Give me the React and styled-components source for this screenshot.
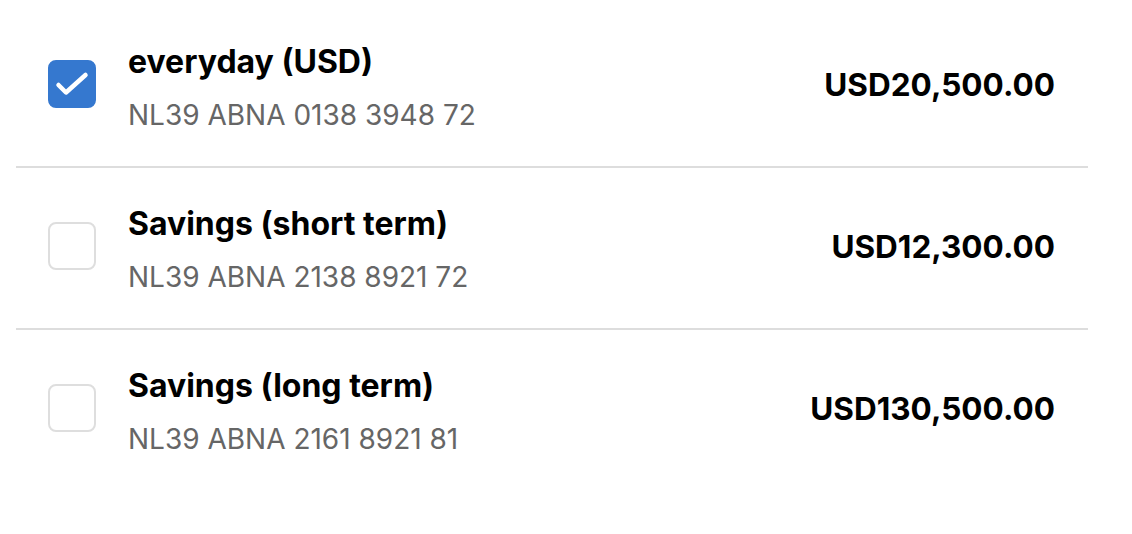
import React from "react";
import styled, { createGlobalStyle } from "styled-components";

const Global = createGlobalStyle`
  html, body { margin: 0; padding: 0; background: #fff; }
  body { font-family: Inter, "Noto Sans", sans-serif; -webkit-font-smoothing: antialiased; }
`;

const List = styled.ul`
  list-style: none;
  margin: 0 44px 0 16px;
  padding: 6px 0 0;
`;

const Row = styled.li`
  display: flex;
  align-items: center;
  height: 160px;
  box-sizing: content-box;
  padding: 0 33px 0 32px;
  border-bottom: ${(p) => (p.$last ? "none" : "2px solid #dddddd")};
`;

const Box = styled.span`
  flex: none;
  width: 48px;
  height: 48px;
  box-sizing: border-box;
  border-radius: 8px;
  margin-top: -4px;
  display: flex;
  align-items: center;
  justify-content: center;
  background: ${(p) => (p.$checked ? "#3578cf" : "#fff")};
  border: 2px solid ${(p) => (p.$checked ? "#3578cf" : "#dedede")};
`;

const Info = styled.div`
  flex: 1;
  margin-left: 32px;
  display: flex;
  flex-direction: column;
  gap: 17px;
  margin-top: 2px;
`;

const Title = styled.div`
  font-size: 32px;
  line-height: 38px;
  font-weight: 700;
  color: #000;
`;

const Iban = styled.div`
  font-size: 28px;
  line-height: 34px;
  color: #666;
`;

const Amount = styled.div`
  font-size: 31.5px;
  font-weight: 700;
  color: #000;
  margin-top: -4px;
`;

const accounts = [
  { name: "everyday (USD)", iban: "NL39 ABNA 0138 3948 72", amount: "USD20,500.00", checked: true },
  { name: "Savings (short term)", iban: "NL39 ABNA 2138 8921 72", amount: "USD12,300.00" },
  { name: "Savings (long term)", iban: "NL39 ABNA 2161 8921 81", amount: "USD130,500.00" },
];

export default function App() {
  return (
    <>
      <Global />
      <List>
        {accounts.map((a, i) => (
          <Row key={a.iban} $last={i === accounts.length - 1}>
            <Box $checked={a.checked}>
              {a.checked && (
                <svg width="48" height="48" viewBox="0 0 48 48" fill="none" style={{ margin: -2 }}>
                  <path d="M10.5 25 L18 32.5 L37.5 15" stroke="#fff" strokeWidth="4.5" strokeLinecap="round" strokeLinejoin="round" />
                </svg>
              )}
            </Box>
            <Info>
              <Title>{a.name}</Title>
              <Iban>{a.iban}</Iban>
            </Info>
            <Amount>{a.amount}</Amount>
          </Row>
        ))}
      </List>
    </>
  );
}
